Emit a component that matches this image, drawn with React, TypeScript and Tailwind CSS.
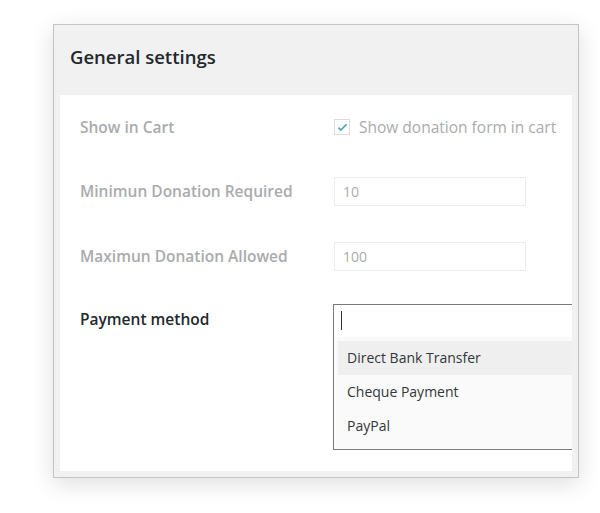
import React from "react";

const font = { fontFamily: '"Open Sans", "Noto Sans", sans-serif' };

function Row({ label, children }: { label: string; children: React.ReactNode }) {
  return (
    <div className="flex h-[64.5px] items-center">
      <div className="w-[254px] shrink-0 text-[15.5px] font-semibold text-[#a9abae]">{label}</div>
      {children}
    </div>
  );
}

const options = ["Direct Bank Transfer", "Cheque Payment", "PayPal"];

export default function App() {
  return (
    <div className="min-h-[513px] w-[600px] bg-white pl-[53px] pt-[24px]" style={font}>
      <div className="w-[526px] border border-[#c4c4c4] bg-[#f1f1f1] shadow-[0_6px_22px_rgba(0,0,0,0.13)]">
        {/* Header */}
        <div className="h-[70px] pl-[16px] pt-[18px]">
          <h2 className="text-[18.5px] font-semibold leading-[28px] text-[#23282d]">General settings</h2>
        </div>

        {/* Body */}
        <div className="mx-[6px] mb-[6px] h-[376px] overflow-hidden bg-white pl-[20px]">
          <Row label="Show in Cart">
            <label className="flex items-center gap-[9px] text-[15.5px] text-[#a9abae]">
              <span className="flex h-[16px] w-[16px] items-center justify-center border border-[#dcdcdc] bg-white">
                <svg viewBox="0 0 16 16" className="h-[13px] w-[13px]">
                  <path d="M3 8.2l3 3 7-7.2" fill="none" stroke="#4ea5c5" strokeWidth="2.2" />
                </svg>
              </span>
              Show donation form in cart
            </label>
          </Row>

          <Row label="Minimun Donation Required">
            <div className="flex h-[29px] w-[192px] items-center border border-[#ececec] pl-[8px] text-[14px] text-[#a9abae]">
              10
            </div>
          </Row>

          <Row label="Maximun Donation Allowed">
            <div className="flex h-[29px] w-[192px] items-center border border-[#ececec] pl-[8px] text-[14px] text-[#a9abae]">
              100
            </div>
          </Row>

          <div className="flex pt-[15px]">
            <div className="flex h-[33px] w-[253px] shrink-0 items-center text-[15.5px] font-semibold text-[#23282d]">
              Payment method
            </div>
            <div className="h-[146px] w-[260px] shrink-0 border border-[#7a7a7a] bg-white">
              <div className="flex h-[32px] items-center pl-[7px]">
                <span className="h-[19px] w-[1px] bg-[#333]" />
              </div>
              <div className="h-[112px] bg-[#fafafa] px-[4px] py-[4px]">
                {options.map((o, i) => (
                  <div
                    key={o}
                    className={`flex h-[34px] items-center pl-[9px] text-[14px] text-[#32373c] ${i === 0 ? "bg-[#efefef]" : ""}`}
                  >
                    {o}
                  </div>
                ))}
              </div>
            </div>
          </div>
        </div>
      </div>
    </div>
  );
}
